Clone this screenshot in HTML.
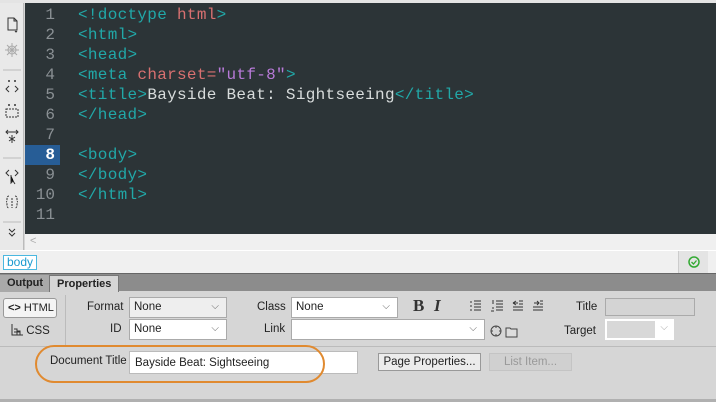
<!DOCTYPE html>
<html><head><style>
*{margin:0;padding:0;box-sizing:border-box}
body{width:716px;height:402px;overflow:hidden;background:#d6d6d6;font-family:"Liberation Sans",sans-serif;font-size:11px;position:relative;color:#222}
.a{position:absolute}
#top{left:0;top:0;width:716px;height:3px;background:#e4e4e4}
#tool{left:0;top:3px;width:24px;height:247px;background:#e9e9e9;border-right:1px solid #bbb}
#code{left:25px;top:3px;width:691px;height:231px;background:#2c3437}
.ln{position:absolute;left:25px;width:35px;text-align:right;padding-right:5px;font-family:"Liberation Mono",monospace;font-size:16px;color:#8a9094;height:20px;line-height:20px}
.cl{position:absolute;left:78px;font-family:"Liberation Mono",monospace;font-size:16px;letter-spacing:0.3px;height:20px;line-height:20px;color:#d8dcdc;white-space:pre}
.t{color:#21a8a8}.r{color:#d87070}.p{color:#b87ad8}
#hl{left:25px;top:145px;width:35px;height:20px;background:#275d96}
#scroll{left:25px;top:234px;width:691px;height:16px;background:#f0f0f0}
#tagbar{left:0;top:250px;width:716px;height:23px;background:#f0f0f0;border-top:1px solid #fff}
#tabs{left:0;top:273px;width:716px;height:18px;background:#8c8c8c;border-top:1px solid #666}
.tab{position:absolute;top:1px;height:17px;line-height:16px;font-size:11px;font-weight:bold;padding:0 7px}
.lbl{position:absolute;font-size:11.5px;color:#222;white-space:nowrap}
.sel{position:absolute;height:21px;background:#fff;border:1px solid #aaa;padding:3px 4px;font-size:11.5px}
.sel i{position:absolute;right:7px;top:3px;font-style:normal;color:#666;font-size:10px}
</style></head><body>
<div class="a" id="top"></div>
<div class="a" id="tool">
<svg width="24" height="247" fill="none" stroke="#333" stroke-width="1">
<path d="M8 15h6l3 3v9H8z"/><path d="M14 15v3h3"/><path d="M15 28l1 1 1-1" />
<g stroke="#aaa"><circle cx="12" cy="47" r="4"/><path d="M5 47h14M12 40v14M7 42l10 10M17 42l-10 10"/></g>
<path d="M3 67h18M3 155h18M3 219h18" stroke="#bbb"/>
<path d="M9 83l-3 3 3 3M15 83l3 3-3 3M8 78h2M14 78h2M9 77v2M15 77v2"/>
<rect x="6" y="106" width="12" height="8" stroke-dasharray="2 1"/><path d="M8 102h2M14 102h2M9 101v2M15 101v2"/>
<path d="M6 129h12M8 127l-2 2 2 2M16 127l2 2-2 2M12 132v8M9 134l6 4M15 134l-6 4"/>
<path d="M9 167l-3 3 3 3M15 167l3 3-3 3"/><path d="M11 172l0 8 2-2 2 3" fill="#000"/>
<path d="M9 193q-2 0-2 3t-1 3q1 0 1 3t2 3M15 193q2 0 2 3t1 3q-1 0-1 3t-2 3M12 195v10" stroke-dasharray="2 1"/>
<path d="M9 226l3 3 3-3M9 230l3 3 3-3"/>
</svg></div>
<div class="a" id="code"></div>
<div class="a" id="hl"></div>
<div class="ln" style="top:5px">1</div><div class="ln" style="top:25px">2</div><div class="ln" style="top:45px">3</div><div class="ln" style="top:65px">4</div><div class="ln" style="top:85px">5</div><div class="ln" style="top:105px">6</div><div class="ln" style="top:125px">7</div><div class="ln" style="top:145px;color:#fff;font-weight:bold">8</div><div class="ln" style="top:165px">9</div><div class="ln" style="top:185px">10</div><div class="ln" style="top:205px">11</div>
<div class="cl" style="top:5px"><span class="t">&lt;!doctype </span><span class="r">html</span><span class="t">&gt;</span></div>
<div class="cl t" style="top:25px">&lt;html&gt;</div>
<div class="cl t" style="top:45px">&lt;head&gt;</div>
<div class="cl" style="top:65px"><span class="t">&lt;meta </span><span class="r">charset=</span><span class="p">"utf-8"</span><span class="t">&gt;</span></div>
<div class="cl" style="top:85px"><span class="t">&lt;title&gt;</span>Bayside Beat: Sightseeing<span class="t">&lt;/title&gt;</span></div>
<div class="cl t" style="top:105px">&lt;/head&gt;</div>
<div class="cl t" style="top:145px">&lt;body&gt;</div>
<div class="cl t" style="top:165px">&lt;/body&gt;</div>
<div class="cl t" style="top:185px">&lt;/html&gt;</div>
<div class="a" id="scroll"><span style="position:absolute;left:5px;top:1px;color:#aaa;font-size:11px">&lt;</span></div>
<div class="a" id="tagbar">
<span style="position:absolute;left:3px;top:4px;height:15px;line-height:13px;border:1px solid #4ab8e0;padding:0 3px;color:#1a9ad0;font-size:12px;background:#fff">body</span>
<div style="position:absolute;left:678px;top:0;width:30px;height:22px;background:#e4e4e4;border-left:1px solid #ccc"><svg width="30" height="22"><circle cx="15" cy="11" r="5" fill="none" stroke="#3a3" stroke-width="1.5"/><path d="M12.5 11l2 2 3-3.5" stroke="#3a3" fill="none" stroke-width="1.3"/></svg></div>
</div>
<div class="a" id="tabs">
<div class="tab" style="left:0;color:#222;background:#a9a9a9">Output</div>
<div class="tab" style="left:49px;background:#d6d6d6;color:#222;border:1px solid #777;border-bottom:none">Properties</div>
</div>
<div class="a" style="left:3px;top:298px;width:54px;height:20px;border:1px solid #999;border-radius:3px;background:#f4f4f4;font-size:11px;line-height:18px;padding-left:4px;white-space:nowrap"><b>&lt;&gt;</b> HTML</div>
<div class="lbl" style="left:11px;top:324px"><svg width="12" height="12" style="vertical-align:-2px"><path d="M1 0v11h11M3 5h3v6M6 7h3v4M3 8h6" fill="none" stroke="#333"/></svg> CSS</div>
<div class="a" style="left:65px;top:295px;width:1px;height:50px;background:#bbb"></div>
<div class="lbl" style="left:87px;top:301px">Format</div>
<div class="sel" style="left:129px;top:297px;width:98px;background:#eee">None<i>⌵</i></div>
<div class="lbl" style="left:110px;top:323px">ID</div>
<div class="sel" style="left:129px;top:319px;width:98px">None<i>⌵</i></div>
<div class="lbl" style="left:257px;top:301px">Class</div>
<div class="sel" style="left:291px;top:297px;width:107px">None<i>⌵</i></div>
<div class="lbl" style="left:264px;top:323px">Link</div>
<div class="sel" style="left:291px;top:319px;width:194px"><i>⌵</i></div>
<div class="a" style="left:413px;top:296px;font:bold 17px 'Liberation Serif',serif;color:#333">B</div>
<div class="a" style="left:434px;top:296px;font:italic bold 17px 'Liberation Serif',serif;color:#333">I</div>
<svg class="a" style="left:469px;top:299px" width="90" height="14" fill="none" stroke="#333">
<path d="M1 3h2M1 7h2M1 11h2M5 2h7M5 5h7M5 8h7M5 11h7"/>
<path d="M24 1v4M23 9h2M22 12h3M27 2h7M27 5h7M27 8h7M27 11h7"/>
<path d="M44 4l3-2M44 4l3 2M44 4h5M44 8h10M44 11h10M50 2h4M50 5h4"/>
<path d="M65 4h5M68 2l2 2-2 2M64 8h10M64 11h10M64 2h0M71 2h3M71 5h3"/>
</svg>
<div class="lbl" style="left:576px;top:301px">Title</div>
<div class="a" style="left:605px;top:298px;width:90px;height:18px;border:1px solid #aaa;background:#d4d4d4"></div>
<div class="lbl" style="left:564px;top:325px">Target</div>
<div class="a" style="left:605px;top:319px;width:69px;height:21px;background:#fff"><div style="position:absolute;left:2px;top:2px;width:48px;height:17px;background:#d8d8d8"></div><span style="position:absolute;right:6px;top:3px;color:#aaa;font-size:10px">⌵</span></div>
<svg class="a" style="left:489px;top:323px" width="30" height="16"><circle cx="7" cy="8" r="5" fill="none" stroke="#444"/><path d="M7 3v2M7 11v2M2 8h2M10 8h2" stroke="#444"/><path d="M17 5h4l1 1h6v8H17z" fill="#ddd" stroke="#444"/></svg>
<div class="a" style="left:0;top:346px;width:716px;height:1px;background:#bbb"></div>
<div class="lbl" style="left:50px;top:355px">Document Title</div>
<div class="a" style="left:129px;top:351px;width:229px;height:23px;background:#fff;border:1px solid #bbb;padding:5px 5px;font-size:11.5px">Bayside Beat: Sightseeing</div>
<div class="a" style="left:35px;top:345px;width:290px;height:38px;border:2px solid #e08a30;border-radius:19px"></div>
<div class="a" style="left:378px;top:353px;width:103px;height:18px;border:1px solid #999;background:#ececec;font-size:11.5px;line-height:16px;text-align:center">Page Properties...</div>
<div class="a" style="left:489px;top:353px;width:83px;height:18px;border:1px solid #c4c4c4;background:#d0d0d0;color:#999;font-size:11.5px;line-height:16px;text-align:center">List Item...</div>
<div class="a" style="left:0;top:399px;width:716px;height:3px;background:#b0b0b0"></div>
</body></html>
